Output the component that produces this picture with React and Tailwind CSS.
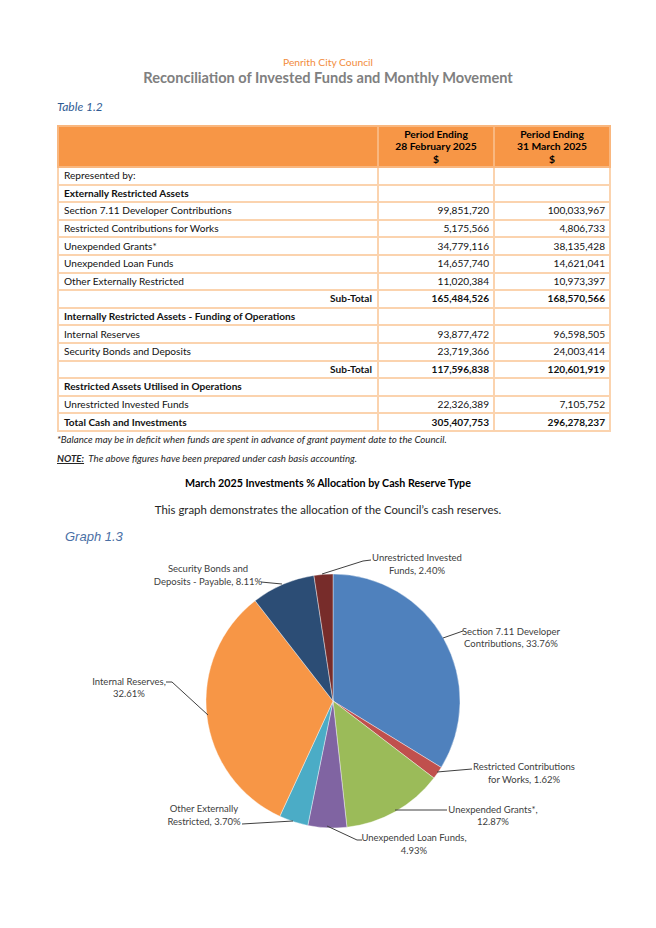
import React from 'react'

const rows = [
  { label: 'Represented by:', a: '', b: '' },
  { label: 'Externally Restricted Assets', a: '', b: '', bold: true },
  { label: 'Section 7.11 Developer Contributions', a: '99,851,720', b: '100,033,967' },
  { label: 'Restricted Contributions for Works', a: '5,175,566', b: '4,806,733' },
  { label: 'Unexpended Grants*', a: '34,779,116', b: '38,135,428' },
  { label: 'Unexpended Loan Funds', a: '14,657,740', b: '14,621,041' },
  { label: 'Other Externally Restricted', a: '11,020,384', b: '10,973,397' },
  { label: 'Sub-Total', a: '165,484,526', b: '168,570,566', sub: true },
  { label: 'Internally Restricted Assets - Funding of Operations', a: '', b: '', bold: true },
  { label: 'Internal Reserves', a: '93,877,472', b: '96,598,505' },
  { label: 'Security Bonds and Deposits', a: '23,719,366', b: '24,003,414' },
  { label: 'Sub-Total', a: '117,596,838', b: '120,601,919', sub: true },
  { label: 'Restricted Assets Utilised in Operations', a: '', b: '', bold: true },
  { label: 'Unrestricted Invested Funds', a: '22,326,389', b: '7,105,752' },
  { label: 'Total Cash and Investments', a: '305,407,753', b: '296,278,237', bold: true, total: true },
]

const slices = [
  { pct: 33.76, color: '#4F81BD' },
  { pct: 1.62, color: '#C0504D' },
  { pct: 12.87, color: '#9BBB59' },
  { pct: 4.93, color: '#8064A2' },
  { pct: 3.7, color: '#4BACC6' },
  { pct: 32.61, color: '#F79646' },
  { pct: 8.11, color: '#2C4D75' },
  { pct: 2.4, color: '#772C2A' },
]

// page coordinates, shifted into the svg below
const TOP = 548
const labels = [
  { x: 417, y: [559, 572], text: ['Unrestricted Invested', 'Funds, 2.40%'], line: [[322, 576], [363, 563], [371, 562]] },
  { x: 208, y: [570, 583], text: ['Security Bonds and', 'Deposits - Payable, 8.11%'], line: [[261, 584], [282, 586]] },
  { x: 511, y: [633, 645], text: ['Section 7.11 Developer', 'Contributions, 33.76%'], line: [[443, 640], [463, 633]] },
  { x: 129, y: [683, 695], text: ['Internal Reserves,', '32.61%'], line: [[166, 684], [172, 684], [208, 717]] },
  { x: 524, y: [768, 781], text: ['Restricted Contributions', 'for Works, 1.62%'], line: [[437, 774], [472, 771]] },
  { x: 493, y: [811, 823], text: ['Unexpended Grants*,', '12.87%'], line: [[395, 812], [447, 812]] },
  { x: 414, y: [839, 852], text: ['Unexpended Loan Funds,', '4.93%'], line: [[327, 828], [357, 842], [362, 842]] },
  { x: 204, y: [810, 823], text: ['Other Externally', 'Restricted, 3.70%'], line: [[242, 826], [293, 823]] },
]

function PieChart() {
  const cx = 333
  const cy = 703 - TOP
  const r = 127
  let acc = 0
  const pt = (deg) => {
    const a = (deg * Math.PI) / 180
    return [cx + r * Math.sin(a), cy - r * Math.cos(a)]
  }
  return (
    <svg width="656" height="320" className="block">
      {slices.map((s, i) => {
        const start = (acc / 100) * 360
        acc += s.pct
        const end = (acc / 100) * 360
        const [x1, y1] = pt(start)
        const [x2, y2] = pt(end)
        const large = end - start > 180 ? 1 : 0
        return (
          <path
            key={i}
            d={`M${cx},${cy} L${x1},${y1} A${r},${r} 0 ${large} 1 ${x2},${y2} Z`}
            fill={s.color}
            stroke="#ffffff"
            strokeWidth="0.4"
          />
        )
      })}
      {labels.map((l, i) => (
        <g key={i}>
          <polyline
            points={l.line.map(([x, y]) => `${x},${y - TOP}`).join(' ')}
            fill="none"
            stroke="#404040"
            strokeWidth="1"
          />
          {l.text.map((t, j) => (
            <text
              key={j}
              x={l.x}
              y={l.y[j] - TOP + 3.5}
              textAnchor="middle"
              fontSize="9.5"
              fill="#404040"
              fontFamily="Lato, 'Liberation Sans', sans-serif"
            >
              {t}
            </text>
          ))}
        </g>
      ))}
    </svg>
  )
}

export default function App() {
  return (
    <div className="w-[656px] h-[928px] bg-white font-['Lato','Liberation_Sans',sans-serif] text-[#1a1a1a]">
      <div className="pt-[55px] text-center text-[10.3px] leading-[14px] text-[#F28C3C]">Penrith City Council</div>
      <div className="text-center text-[14.6px] leading-[18px] font-bold text-[#808080]">
        Reconciliation of Invested Funds and Monthly Movement
      </div>

      <div className="px-[57px] mt-[12px] text-[12px] leading-[16px] italic text-[#2F5B94]">Table 1.2</div>

      <div className="px-[57px] mt-[10px]">
        <table className="w-[552px] border-collapse text-[10.1px] table-fixed text-[#111]">
          <colgroup>
            <col className="w-[320px]" />
            <col className="w-[116px]" />
            <col className="w-[116px]" />
          </colgroup>
          <thead>
            <tr className="h-[41px] bg-[#F79646]">
              <th className="border-2 border-[#F9B77F]"></th>
              <th className="border-2 border-[#F9B77F] font-bold text-center leading-[12.5px] text-[10.3px] text-black">
                Period Ending<br />28 February 2025<br />$
              </th>
              <th className="border-2 border-[#F9B77F] font-bold text-center leading-[12.5px] text-[10.3px] text-black">
                Period Ending<br />31 March 2025<br />$
              </th>
            </tr>
          </thead>
          <tbody>
            {rows.map((row, i) => (
              <tr key={i} className="h-[17.6px] leading-[13px]">
                <td
                  className={`border-2 border-[#FBD3AE] px-[5px] ${row.bold || row.sub ? 'font-bold' : ''} ${row.sub ? 'text-right' : ''}`}
                >
                  {row.label}
                </td>
                <td className={`border-2 border-[#FBD3AE] px-[4px] text-right ${row.sub || row.total ? 'font-bold' : ''}`}>{row.a}</td>
                <td className={`border-2 border-[#FBD3AE] px-[4px] text-right ${row.sub || row.total ? 'font-bold' : ''}`}>{row.b}</td>
              </tr>
            ))}
          </tbody>
        </table>
      </div>

      <div className="px-[57px] mt-[1px] text-[9.7px] leading-[12px] italic text-[#262626]">
        *Balance may be in deficit when funds are spent in advance of grant payment date to the Council.
      </div>
      <div className="px-[57px] mt-[7px] text-[9.7px] leading-[12px] italic text-[#262626]">
        <span className="font-bold underline">NOTE:</span>&nbsp; The above figures have been prepared under cash basis accounting.
      </div>

      <div className="mt-[12px] text-center text-[10.7px] leading-[13px] font-bold text-black">
        March 2025 Investments % Allocation by Cash Reserve Type
      </div>
      <div className="mt-[12px] text-center text-[11.4px] leading-[17px] text-[#262626]">
        This graph demonstrates the allocation of the Council’s cash reserves.
      </div>
      <div className="mt-[10px] pl-[65px] text-[13px] leading-[18px] italic text-[#4A6FA5] font-['Liberation_Sans',sans-serif]">
        Graph 1.3
      </div>

      <PieChart />
    </div>
  )
}
